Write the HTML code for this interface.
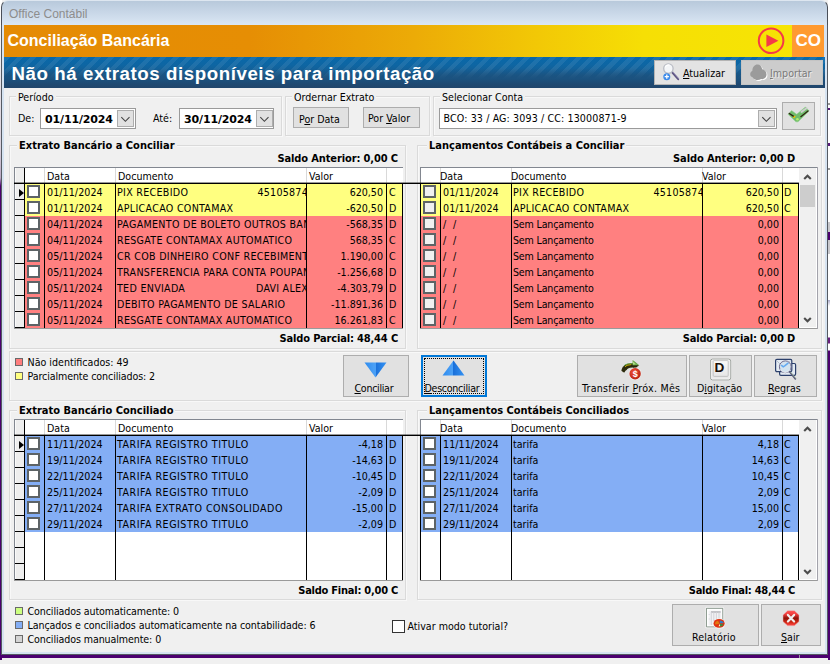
<!DOCTYPE html>
<html lang="pt-BR"><head><meta charset="utf-8"><title>Conciliação Bancária</title>
<style>
*{box-sizing:border-box;margin:0;padding:0}
html,body{width:830px;height:664px;overflow:hidden;background:#f0f0f0}
body{position:relative;font-family:"DejaVu Sans Condensed","DejaVu Sans","Liberation Sans",sans-serif;font-size:10.6px;color:#000;line-height:13px}
.a{position:absolute;white-space:nowrap}
.b{font-weight:bold;font-size:11px}
.gb{position:absolute;border:1px solid #dadada;box-shadow:inset 1px 1px 0 rgba(255,255,255,.55), 1px 1px 0 rgba(255,255,255,.55)}
.gt{position:absolute;background:#f0f0f0;padding:0 2px;white-space:nowrap}
.btn{position:absolute;background:#e1e1e1;border:1px solid #adadad;text-align:center;white-space:nowrap}
.inp{position:absolute;background:#fff;border:1px solid #9a9a9a}
.dd{position:absolute;background:#e1e1e1;border:1px solid #adadad}
.grid{position:absolute;background:#fff;overflow:hidden}
.row{position:absolute;left:0;height:16px}
.c{position:absolute;top:0;height:16px;line-height:16px;white-space:nowrap;overflow:hidden}
.vl{position:absolute;width:1px;background:#000}
.hl{position:absolute;height:1px;background:#000}
.cb{position:absolute;width:13px;height:13px;background:#f0f0f0;border:2px solid #5d6366}
.sw{position:absolute;width:8px;height:8px;border:1px solid #6a6a6a}
u{text-decoration:underline;text-underline-offset:1px}
</style></head>
<body>
<div class="a" style="left:0;top:0;width:830px;height:664px;background:#f0f0f0"></div>
<div class="a" style="left:0;top:0;width:2px;height:664px;background:linear-gradient(#fff 0,#f4f4f6 40px,#e4e0e6 90px,#d8d0dc 150px,#b9a8c4 178px,#4c0070 186px,#4c0070 100%)"></div>
<div class="a" style="left:828px;top:0;width:2px;height:664px;background:linear-gradient(#fff 0,#fff 103px,#999 103px,#999 105px,#fff 105px,#fff 108px,#5a1a7a 108px,#5a1a7a 110px,#fff 110px,#fff 143px,#5a1a7a 143px,#5a1a7a 146px,#fff 146px,#fff 168px,#999 168px,#999 170px,#fff 170px,#fff 222px,#c8c8cc 222px,#c8c8cc 232px,#4c0070 232px,#4c0070 240px,#c8c8cc 240px,#c8c8cc 254px,#fff 254px,#fff 300px,#a9a9c9 300px,#fff 306px,#fff 337px,#6a2080 338px,#6a2080 343px,#fff 344px,#fff 350px,#4c0070 351px,#4c0070 100%)"></div>
<div class="a" style="left:1px;top:0;width:827px;height:26px;background:linear-gradient(#b8c9db,#c6d5e6 40%,#dce8f5);border:1px solid #4a4f58;border-top-color:#dde6f0;border-bottom:0;border-radius:7px 7px 0 0"></div>
<div class="a" style="left:9px;top:7px;font-family:'Liberation Sans',sans-serif;font-size:12px;line-height:15px;color:#8d8d8d">Office Contábil</div>
<div class="a" style="left:1px;top:25px;width:1px;height:630px;background:#555a62"></div>
<div class="a" style="left:2px;top:25px;width:2px;height:629px;background:#d6e3f1"></div>
<div class="a" style="left:827px;top:25px;width:1px;height:630px;background:#555a62"></div>
<div class="a" style="left:824px;top:25px;width:3px;height:32px;background:#d6e3f1"></div>
<div class="a" style="left:825px;top:57px;width:2px;height:597px;background:#d6e3f1"></div>
<div class="a" style="left:2px;top:652px;width:825px;height:2px;background:#d6e3f1"></div>
<div class="a" style="left:1px;top:654px;width:827px;height:1px;background:#555a62"></div>
<div class="a" style="left:0;top:655px;width:830px;height:3px;background:#4c0070"></div>
<div class="a" style="left:799px;top:655px;width:1px;height:3px;background:#9a8fa6"></div>
<div class="a" style="left:0;top:658px;width:830px;height:2px;background:linear-gradient(#e8e8e8 0,#fff 40%%,#fff)"></div>
<div class="a" style="left:0;top:660px;width:830px;height:4px;background:#f0f0f0"></div>
<div class="a" style="left:4px;top:25px;width:820px;height:32px;background:linear-gradient(90deg,#e58b04 0,#e68e04 30%,#ecab07 50%,#f2c806 65%,#f6df05 78%,#f6e604 100%)"></div>
<div class="a b" style="left:7.5px;top:31px;font-family:'Liberation Sans',sans-serif;font-size:16px;line-height:19px;color:#fff">Conciliação Bancária</div>
<svg class="a" style="left:756px;top:26px" width="30" height="30" viewBox="0 0 30 30"><circle cx="15.1" cy="14.7" r="12.3" fill="none" stroke="#f53a48" stroke-width="2"/><path d="M10.4 8.6 L22.4 14.8 L10.4 21 Z" fill="#f53a48"/></svg>
<div class="a" style="left:792px;top:25px;width:32px;height:32px;background:#ff9a30"></div>
<div class="a b" style="left:795.5px;top:31px;font-family:'Liberation Sans',sans-serif;font-size:17px;line-height:20px;color:#fff">CO</div>
<div class="a" style="left:4px;top:57px;width:821px;height:31px;background:linear-gradient(rgba(26,84,132,0) 0,rgba(26,84,132,0) 38%,#1b527f 70%,#1e4a73 85%,#20456b 100%),repeating-linear-gradient(135deg,rgba(255,255,255,.075) 0 4.6px,rgba(255,255,255,0) 4.6px 9.2px),linear-gradient(#0868aa 0,#0e66a3 25%,#155d93 50%,#1b527f 70%,#20456b 100%)"></div>
<div class="a b" style="left:11.5px;top:63px;font-family:'Liberation Sans',sans-serif;font-size:18.7px;letter-spacing:.57px;line-height:22px;color:#fff">Não há extratos disponíveis para importação</div>
<div class="btn" style="left:654px;top:60px;width:82px;height:25px;background:#e3e3e3;border-color:#b4b4b4"></div>
<svg class="a" style="left:660px;top:62px" width="22" height="21" viewBox="0 0 22 21"><path d="M11.5 9.5 L18.2 17.2" stroke="#5b5280" stroke-width="2" stroke-linecap="round"/><path d="M11.5 9.5 L18.2 17.2" stroke="#a9a3c4" stroke-width=".7" stroke-linecap="round" transform="translate(.6,-.6)"/><circle cx="8.4" cy="6.6" r="4.7" fill="#f4f6f8" stroke="#b9bcc4" stroke-width="1.3"/><path d="M5.2 5.4 A3.6 3.6 0 0 1 9.6 3.2" fill="none" stroke="#fff" stroke-width="1.2"/><circle cx="6.8" cy="14.7" r="3.5" fill="#3d8bea"/><path d="M6.8 12.6 V16.8 M4.7 14.7 H8.9" stroke="#fff" stroke-width="1.3"/></svg>
<div class="a" style="left:683px;top:67px"><u>A</u>tualizar</div>
<div class="btn" style="left:741px;top:60px;width:82px;height:25px;background:#cccccc;border-color:#c4c4c4"></div>
<svg class="a" style="left:749px;top:63px" width="20" height="19" viewBox="0 0 20 19"><path d="M3.2 14.2 C0.6 13.2 0.4 9.2 3.4 7.8 C3.2 3.8 6 1.2 8.6 1.4 C11 1.4 12.6 3.4 13.2 6.2 C16.2 6.8 18 9.4 17.4 12.6 C17 15.2 14.6 16.6 12 16 C9.6 17.8 5.4 17.2 3.2 14.2 Z" fill="#fff" transform="translate(.9,.9)"/><path d="M3.2 14.2 C0.6 13.2 0.4 9.2 3.4 7.8 C3.2 3.8 6 1.2 8.6 1.4 C11 1.4 12.6 3.4 13.2 6.2 C16.2 6.8 18 9.4 17.4 12.6 C17 15.2 14.6 16.6 12 16 C9.6 17.8 5.4 17.2 3.2 14.2 Z" fill="#9b9b9b"/></svg>
<div class="a" style="left:770px;top:67px;color:#7a7a7a;text-shadow:1px 1px 0 #e9e9e9"><u>I</u>mportar</div>
<div class="gb" style="left:9px;top:96px;width:273px;height:40px"></div>
<div class="gt" style="left:16px;top:91px">Período</div>
<div class="gb" style="left:285px;top:96px;width:145px;height:40px"></div>
<div class="gt" style="left:292px;top:91px">Ordernar Extrato</div>
<div class="gb" style="left:433px;top:96px;width:388px;height:40px"></div>
<div class="gt" style="left:440px;top:91px">Selecionar Conta</div>
<div class="a" style="left:18px;top:112px">De:</div>
<div class="inp" style="left:40px;top:108px;width:96px;height:21px"></div>
<div class="a b" style="left:45px;top:113px;letter-spacing:-.14px;font-size:11px;font-family:'DejaVu Sans',sans-serif">01/11/2024</div>
<div class="dd" style="left:117px;top:110px;width:17px;height:17px"></div>
<div class="a" style="left:153px;top:112px">Até:</div>
<div class="inp" style="left:179px;top:108px;width:95px;height:21px"></div>
<div class="a b" style="left:184px;top:113px;letter-spacing:-.14px;font-size:11px;font-family:'DejaVu Sans',sans-serif">30/11/2024</div>
<div class="dd" style="left:256px;top:110px;width:17px;height:17px"></div>
<svg class="a" style="left:120px;top:116px" width="11" height="7" viewBox="0 0 11 7"><path d="M1.3 1.2 L5.4 5.3 L9.5 1.2" fill="none" stroke="#444" stroke-width="1.1"/></svg>
<svg class="a" style="left:259px;top:116px" width="11" height="7" viewBox="0 0 11 7"><path d="M1.3 1.2 L5.4 5.3 L9.5 1.2" fill="none" stroke="#444" stroke-width="1.1"/></svg>
<div class="btn" style="left:293px;top:107px;width:56px;height:21px"></div>
<div class="a" style="left:299px;top:113px">P<u>o</u>r Data</div>
<div class="btn" style="left:363px;top:107px;width:57px;height:21px"></div>
<div class="a" style="left:368px;top:112px">Por <u>V</u>alor</div>
<div class="inp" style="left:439px;top:108px;width:338px;height:21px"></div>
<div class="a" style="left:443.5px;top:112px;letter-spacing:.12px">BCO: 33 / AG: 3093 / CC: 13000871-9</div>
<div class="dd" style="left:758px;top:110px;width:17px;height:17px"></div>
<svg class="a" style="left:761px;top:116px" width="11" height="7" viewBox="0 0 11 7"><path d="M1.3 1.2 L5.4 5.3 L9.5 1.2" fill="none" stroke="#444" stroke-width="1.1"/></svg>
<div class="btn" style="left:782px;top:102px;width:33px;height:28px"></div>
<svg class="a" style="left:787px;top:105px" width="24" height="20" viewBox="0 0 24 20"><path d="M4.55 5.57 L9.7 9.26 L18.37 1.94 L22.17 6 L11.05 16.85 L8.89 16.85 L1.03 9.26 Z" fill="#70bc6c" stroke="#8fd08a" stroke-width=".5"/><path d="M14.58 6.82 L19.46 3.3" stroke="#cbcdcb" stroke-width="2" stroke-linecap="round"/><path d="M2.3 8.5 L6.7 11.4" stroke="#2e2410" stroke-width="1.4" stroke-linecap="round"/><path d="M13.8 11.7 L21 5.95" stroke="#2e2410" stroke-width="1.2" stroke-linecap="round"/><ellipse cx="7.3" cy="11.9" rx="1.4" ry=".8" fill="#f2c200" transform="rotate(-35 7.3 11.9)"/><circle cx="10.4" cy="14.3" r="1.3" fill="#b4f06a"/></svg>
<div class="gb" style="left:9px;top:145px;width:397px;height:204px"></div>
<div class="gt b" style="left:17px;top:139px">Extrato Bancário a Conciliar</div>
<div class="gb" style="left:417px;top:145px;width:405px;height:204px"></div>
<div class="gt b" style="left:427px;top:139px">Lançamentos Contábeis a Conciliar</div>
<div class="a" style="left:14px;top:167px;width:389px;height:161px;background:#fff;border-top:1px solid #828790;border-left:1px solid #828790"></div>
<div class="a" style="left:25px;top:184px;width:377px;height:16px;background:#ffff80">
<div class="cb" style="left:2px;top:1px;background:#fff"></div>
<div class="c" style="left:20px;width:70px;letter-spacing:.08px;padding-left:2px;">01/11/2024</div>
<div class="c" style="left:91px;width:190px;letter-spacing:.3px;padding-left:1px;">PIX RECEBIDO</div>
<div class="c" style="left:91px;width:190px"><div style="position:absolute;right:-2px;top:0;letter-spacing:.25px">45105874</div></div>
<div class="c" style="left:282px;width:79px;text-align:right;padding-right:3px;">620,50</div>
<div class="c" style="left:362px;width:15px;padding-left:2px;">C</div>
</div>
<div class="a" style="left:25px;top:200px;width:377px;height:16px;background:#ffff80">
<div class="cb" style="left:2px;top:1px;background:#fff"></div>
<div class="c" style="left:20px;width:70px;letter-spacing:.08px;padding-left:2px;">01/11/2024</div>
<div class="c" style="left:91px;width:190px;letter-spacing:.3px;padding-left:1px;">APLICACAO CONTAMAX</div>
<div class="c" style="left:282px;width:79px;text-align:right;padding-right:3px;">-620,50</div>
<div class="c" style="left:362px;width:15px;padding-left:2px;">D</div>
</div>
<div class="a" style="left:25px;top:216px;width:377px;height:16px;background:#ff8080">
<div class="cb" style="left:2px;top:1px;background:#fff"></div>
<div class="c" style="left:20px;width:70px;letter-spacing:.08px;padding-left:2px;">04/11/2024</div>
<div class="c" style="left:91px;width:190px;letter-spacing:.3px;padding-left:1px;">PAGAMENTO DE BOLETO OUTROS BANCOS</div>
<div class="c" style="left:282px;width:79px;text-align:right;padding-right:3px;">-568,35</div>
<div class="c" style="left:362px;width:15px;padding-left:2px;">D</div>
</div>
<div class="a" style="left:25px;top:232px;width:377px;height:16px;background:#ff8080">
<div class="cb" style="left:2px;top:1px;background:#fff"></div>
<div class="c" style="left:20px;width:70px;letter-spacing:.08px;padding-left:2px;">04/11/2024</div>
<div class="c" style="left:91px;width:190px;letter-spacing:.3px;padding-left:1px;">RESGATE CONTAMAX AUTOMATICO</div>
<div class="c" style="left:282px;width:79px;text-align:right;padding-right:3px;">568,35</div>
<div class="c" style="left:362px;width:15px;padding-left:2px;">C</div>
</div>
<div class="a" style="left:25px;top:248px;width:377px;height:16px;background:#ff8080">
<div class="cb" style="left:2px;top:1px;background:#fff"></div>
<div class="c" style="left:20px;width:70px;letter-spacing:.08px;padding-left:2px;">05/11/2024</div>
<div class="c" style="left:91px;width:190px;letter-spacing:.3px;padding-left:1px;">CR COB DINHEIRO CONF RECEBIMENTO</div>
<div class="c" style="left:282px;width:79px;text-align:right;padding-right:3px;">1.190,00</div>
<div class="c" style="left:362px;width:15px;padding-left:2px;">C</div>
</div>
<div class="a" style="left:25px;top:264px;width:377px;height:16px;background:#ff8080">
<div class="cb" style="left:2px;top:1px;background:#fff"></div>
<div class="c" style="left:20px;width:70px;letter-spacing:.08px;padding-left:2px;">05/11/2024</div>
<div class="c" style="left:91px;width:190px;letter-spacing:.3px;padding-left:1px;">TRANSFERENCIA PARA CONTA POUPANCA</div>
<div class="c" style="left:282px;width:79px;text-align:right;padding-right:3px;">-1.256,68</div>
<div class="c" style="left:362px;width:15px;padding-left:2px;">D</div>
</div>
<div class="a" style="left:25px;top:280px;width:377px;height:16px;background:#ff8080">
<div class="cb" style="left:2px;top:1px;background:#fff"></div>
<div class="c" style="left:20px;width:70px;letter-spacing:.08px;padding-left:2px;">05/11/2024</div>
<div class="c" style="left:91px;width:190px;letter-spacing:.3px;padding-left:1px;">TED ENVIADA</div>
<div class="c" style="left:91px;width:190px"><div style="position:absolute;right:-2px;top:0;letter-spacing:.25px">DAVI ALEX</div></div>
<div class="c" style="left:282px;width:79px;text-align:right;padding-right:3px;">-4.303,79</div>
<div class="c" style="left:362px;width:15px;padding-left:2px;">D</div>
</div>
<div class="a" style="left:25px;top:296px;width:377px;height:16px;background:#ff8080">
<div class="cb" style="left:2px;top:1px;background:#fff"></div>
<div class="c" style="left:20px;width:70px;letter-spacing:.08px;padding-left:2px;">05/11/2024</div>
<div class="c" style="left:91px;width:190px;letter-spacing:.3px;padding-left:1px;">DEBITO PAGAMENTO DE SALARIO</div>
<div class="c" style="left:282px;width:79px;text-align:right;padding-right:3px;">-11.891,36</div>
<div class="c" style="left:362px;width:15px;padding-left:2px;">D</div>
</div>
<div class="a" style="left:25px;top:312px;width:377px;height:16px;background:#ff8080">
<div class="cb" style="left:2px;top:1px;background:#fff"></div>
<div class="c" style="left:20px;width:70px;letter-spacing:.08px;padding-left:2px;">05/11/2024</div>
<div class="c" style="left:91px;width:190px;letter-spacing:.3px;padding-left:1px;">RESGATE CONTAMAX AUTOMATICO</div>
<div class="c" style="left:282px;width:79px;text-align:right;padding-right:3px;">16.261,83</div>
<div class="c" style="left:362px;width:15px;padding-left:2px;">C</div>
</div>
<div class="a" style="left:15px;top:168px;width:9px;height:160px;background:#eeeeee;box-shadow:inset 1px 0 0 #fafafa"></div>
<div class="hl" style="left:15px;top:199px;width:10px"></div>
<div class="hl" style="left:15px;top:215px;width:10px"></div>
<div class="hl" style="left:15px;top:231px;width:10px"></div>
<div class="hl" style="left:15px;top:247px;width:10px"></div>
<div class="hl" style="left:15px;top:263px;width:10px"></div>
<div class="hl" style="left:15px;top:279px;width:10px"></div>
<div class="hl" style="left:15px;top:295px;width:10px"></div>
<div class="hl" style="left:15px;top:311px;width:10px"></div>
<div class="hl" style="left:15px;top:327px;width:10px"></div>
<div class="vl" style="left:24px;top:168px;height:160px"></div>
<svg class="a" style="left:19px;top:189px" width="5" height="8" viewBox="0 0 5 8"><path d="M0 0 L5 4 L0 8 Z" fill="#000"/></svg>
<div class="vl" style="left:44px;top:184px;height:144px"></div>
<div class="vl" style="left:115px;top:184px;height:144px"></div>
<div class="vl" style="left:306px;top:184px;height:144px"></div>
<div class="vl" style="left:386px;top:184px;height:144px"></div>
<div class="vl" style="left:402px;top:184px;height:144px"></div>
<div class="vl" style="left:44px;top:168px;height:15px;background:#d9d9d9"></div>
<div class="vl" style="left:115px;top:168px;height:15px;background:#d9d9d9"></div>
<div class="vl" style="left:306px;top:168px;height:15px;background:#d9d9d9"></div>
<div class="vl" style="left:386px;top:168px;height:15px;background:#d9d9d9"></div>
<div class="a" style="left:47px;top:169px;line-height:15px">Data</div>
<div class="a" style="left:118px;top:169px;line-height:15px">Documento</div>
<div class="a" style="left:309px;top:169px;line-height:15px">Valor</div>
<div class="a" style="left:14px;top:182px;width:426px;height:2px;background:linear-gradient(rgba(0,0,0,.4) 0,rgba(0,0,0,.4) 50%,#000 50%)"></div>
<div class="a" style="left:14px;top:328px;width:389px;height:1px;background:#9a9a9a"></div>
<div class="a" style="left:420px;top:167px;width:398px;height:161px;background:#fff;border-top:1px solid #828790;border-left:1px solid #828790"></div>
<div class="a" style="left:421px;top:184px;width:377px;height:16px;background:#ffff80">
<div class="cb" style="left:2px;top:1px"></div>
<div class="c" style="left:20px;width:70px;letter-spacing:.08px;padding-left:2px;">01/11/2024</div>
<div class="c" style="left:91px;width:190px;letter-spacing:.3px;padding-left:1px;">PIX RECEBIDO</div>
<div class="c" style="left:91px;width:190px"><div style="position:absolute;right:-2px;top:0;letter-spacing:.25px">45105874</div></div>
<div class="c" style="left:282px;width:79px;text-align:right;padding-right:3px;">620,50</div>
<div class="c" style="left:362px;width:15px;padding-left:1px;">D</div>
</div>
<div class="a" style="left:421px;top:200px;width:377px;height:16px;background:#ffff80">
<div class="cb" style="left:2px;top:1px"></div>
<div class="c" style="left:20px;width:70px;letter-spacing:.08px;padding-left:2px;">01/11/2024</div>
<div class="c" style="left:91px;width:190px;letter-spacing:.3px;padding-left:1px;">APLICACAO CONTAMAX</div>
<div class="c" style="left:282px;width:79px;text-align:right;padding-right:3px;">620,50</div>
<div class="c" style="left:362px;width:15px;padding-left:1px;">C</div>
</div>
<div class="a" style="left:421px;top:216px;width:377px;height:16px;background:#ff8080">
<div class="cb" style="left:2px;top:1px"></div>
<div class="c" style="left:20px;width:70px;word-spacing:3.8px;padding-left:2px;">/ /</div>
<div class="c" style="left:91px;width:190px;letter-spacing:-.18px;padding-left:1px;">Sem Lançamento</div>
<div class="c" style="left:282px;width:79px;text-align:right;padding-right:3px;">0,00</div>
<div class="c" style="left:362px;width:15px;padding-left:1px;"></div>
</div>
<div class="a" style="left:421px;top:232px;width:377px;height:16px;background:#ff8080">
<div class="cb" style="left:2px;top:1px"></div>
<div class="c" style="left:20px;width:70px;word-spacing:3.8px;padding-left:2px;">/ /</div>
<div class="c" style="left:91px;width:190px;letter-spacing:-.18px;padding-left:1px;">Sem Lançamento</div>
<div class="c" style="left:282px;width:79px;text-align:right;padding-right:3px;">0,00</div>
<div class="c" style="left:362px;width:15px;padding-left:1px;"></div>
</div>
<div class="a" style="left:421px;top:248px;width:377px;height:16px;background:#ff8080">
<div class="cb" style="left:2px;top:1px"></div>
<div class="c" style="left:20px;width:70px;word-spacing:3.8px;padding-left:2px;">/ /</div>
<div class="c" style="left:91px;width:190px;letter-spacing:-.18px;padding-left:1px;">Sem Lançamento</div>
<div class="c" style="left:282px;width:79px;text-align:right;padding-right:3px;">0,00</div>
<div class="c" style="left:362px;width:15px;padding-left:1px;"></div>
</div>
<div class="a" style="left:421px;top:264px;width:377px;height:16px;background:#ff8080">
<div class="cb" style="left:2px;top:1px"></div>
<div class="c" style="left:20px;width:70px;word-spacing:3.8px;padding-left:2px;">/ /</div>
<div class="c" style="left:91px;width:190px;letter-spacing:-.18px;padding-left:1px;">Sem Lançamento</div>
<div class="c" style="left:282px;width:79px;text-align:right;padding-right:3px;">0,00</div>
<div class="c" style="left:362px;width:15px;padding-left:1px;"></div>
</div>
<div class="a" style="left:421px;top:280px;width:377px;height:16px;background:#ff8080">
<div class="cb" style="left:2px;top:1px"></div>
<div class="c" style="left:20px;width:70px;word-spacing:3.8px;padding-left:2px;">/ /</div>
<div class="c" style="left:91px;width:190px;letter-spacing:-.18px;padding-left:1px;">Sem Lançamento</div>
<div class="c" style="left:282px;width:79px;text-align:right;padding-right:3px;">0,00</div>
<div class="c" style="left:362px;width:15px;padding-left:1px;"></div>
</div>
<div class="a" style="left:421px;top:296px;width:377px;height:16px;background:#ff8080">
<div class="cb" style="left:2px;top:1px"></div>
<div class="c" style="left:20px;width:70px;word-spacing:3.8px;padding-left:2px;">/ /</div>
<div class="c" style="left:91px;width:190px;letter-spacing:-.18px;padding-left:1px;">Sem Lançamento</div>
<div class="c" style="left:282px;width:79px;text-align:right;padding-right:3px;">0,00</div>
<div class="c" style="left:362px;width:15px;padding-left:1px;"></div>
</div>
<div class="a" style="left:421px;top:312px;width:377px;height:16px;background:#ff8080">
<div class="cb" style="left:2px;top:1px"></div>
<div class="c" style="left:20px;width:70px;word-spacing:3.8px;padding-left:2px;">/ /</div>
<div class="c" style="left:91px;width:190px;letter-spacing:-.18px;padding-left:1px;">Sem Lançamento</div>
<div class="c" style="left:282px;width:79px;text-align:right;padding-right:3px;">0,00</div>
<div class="c" style="left:362px;width:15px;padding-left:1px;"></div>
</div>
<div class="vl" style="left:440px;top:184px;height:144px"></div>
<div class="vl" style="left:511px;top:184px;height:144px"></div>
<div class="vl" style="left:702px;top:184px;height:144px"></div>
<div class="vl" style="left:782px;top:184px;height:144px"></div>
<div class="vl" style="left:798px;top:184px;height:144px"></div>
<div class="vl" style="left:420px;top:184px;height:144px"></div>
<div class="vl" style="left:440px;top:168px;height:15px;background:#d9d9d9"></div>
<div class="vl" style="left:511px;top:168px;height:15px;background:#d9d9d9"></div>
<div class="vl" style="left:702px;top:168px;height:15px;background:#d9d9d9"></div>
<div class="vl" style="left:782px;top:168px;height:15px;background:#d9d9d9"></div>
<div class="a" style="left:440px;top:169px;line-height:15px">Data</div>
<div class="a" style="left:511px;top:169px;line-height:15px">Documento</div>
<div class="a" style="left:702px;top:169px;line-height:15px">Valor</div>
<div class="a" style="left:420px;top:182px;width:380px;height:2px;background:linear-gradient(rgba(0,0,0,.4) 0,rgba(0,0,0,.4) 50%,#000 50%)"></div>
<div class="a" style="left:420px;top:328px;width:398px;height:1px;background:#9a9a9a"></div>
<div class="a" style="left:799px;top:168px;width:18px;height:160px;background:#f0f0f0"></div>
<svg class="a" style="left:803px;top:174px" width="9" height="6" viewBox="0 0 9 6"><path d="M1.2 5 L4.5 1.7 L7.8 5" fill="none" stroke="#4c4c4c" stroke-width="2.1"/></svg>
<svg class="a" style="left:803px;top:317px" width="9" height="6" viewBox="0 0 9 6"><path d="M1.2 1 L4.5 4.3 L7.8 1" fill="none" stroke="#4c4c4c" stroke-width="2.1"/></svg>
<div class="a" style="left:800px;top:185px;width:15px;height:22px;background:#cdcdcd"></div>
<div class="a" style="left:817px;top:167px;width:1px;height:162px;background:#a3a3ab"></div>
<div class="a" style="left:816px;top:168px;width:1px;height:160px;background:#fff"></div>
<div class="a" style="left:799px;top:184px;width:1px;height:144px;background:#fff"></div>
<div class="a" style="left:799px;top:327px;width:18px;height:1px;background:#fff"></div>
<div class="a b" style="right:432px;top:152px;letter-spacing:-.12px">Saldo Anterior: 0,00 C</div>
<div class="a b" style="right:35px;top:152px;letter-spacing:-.1px">Saldo Anterior: 0,00 D</div>
<div class="a b" style="right:432px;top:332px;letter-spacing:-.15px">Saldo Parcial: 48,44 C</div>
<div class="a b" style="right:35px;top:332px;letter-spacing:-.17px">Saldo Parcial: 0,00 D</div>
<div class="gb" style="left:9px;top:351px;width:813px;height:50px"></div>
<div class="sw" style="left:15px;top:358px;background:#ff7d7d"></div>
<div class="a" style="left:27.5px;top:356px">Não identificados: 49</div>
<div class="sw" style="left:15px;top:372px;background:#ffff80"></div>
<div class="a" style="left:27.5px;top:370px;letter-spacing:-.1px">Parcialmente conciliados: 2</div>
<div class="btn" style="left:343px;top:355px;width:66px;height:42px"></div>
<svg class="a" style="left:364px;top:362px" width="23" height="16" viewBox="0 0 23 16"><defs><linearGradient id="g1" x1="0" x2="1"><stop offset="0" stop-color="#2c8bef"/><stop offset=".42" stop-color="#4a9ff5"/><stop offset=".5" stop-color="#4a9ff5"/><stop offset=".5" stop-color="#1a70da"/><stop offset="1" stop-color="#3593f3"/></linearGradient></defs><path d="M0.5 0.5 L22.5 0.5 L11.5 15.5 Z" fill="url(#g1)"/></svg>
<div class="a" style="left:354.5px;top:382px;letter-spacing:-.3px"><u>C</u>onciliar</div>
<div class="btn" style="left:421px;top:355px;width:66px;height:42px;border:2px solid #0078d7"></div>
<div class="a" style="left:424px;top:358px;width:60px;height:36px;border:1px dotted #000"></div>
<svg class="a" style="left:442px;top:360px" width="23" height="16" viewBox="0 0 23 16"><path d="M0.5 15.5 L22.5 15.5 L11.5 0.5 Z" fill="url(#g1)"/></svg>
<div class="a" style="left:424.5px;top:382px;letter-spacing:-.28px"><u>D</u>esconciliar</div>
<div class="btn" style="left:577px;top:355px;width:110px;height:42px"></div>
<svg class="a" style="left:620px;top:358px" width="24" height="24" viewBox="0 0 24 24"><defs><radialGradient id="gc" cx=".4" cy=".35" r=".7"><stop offset="0" stop-color="#f0503a"/><stop offset="1" stop-color="#b7200f"/></radialGradient></defs><path d="M0.9 13 C1.6 7.8 5.4 4.9 12.6 4.9 L12.6 1.7 L19.4 7.3 L13.2 12.9 L13.2 10 C8.8 9.8 6.4 11.4 4.3 15.3 Z" fill="#2b2a0c" stroke="#f4f4f4" stroke-width=".8"/><path d="M12.6 1.9 L19.2 7.2 L12.6 7.2 Z" fill="#6fb052"/><path d="M12.9 3.6 L15.6 6.3 L12.9 6.6 Z" fill="#b9e08a"/><path d="M4.2 7.6 C6.3 5.9 9 5.5 12.7 5.6" fill="none" stroke="#5d9a40" stroke-width="1"/><path d="M5 8.8 L7 7.3 L11.3 6.6" fill="none" stroke="#f2d400" stroke-width=".8"/><circle cx="15.1" cy="15.8" r="6.3" fill="#f4f4f4"/><circle cx="15.1" cy="15.8" r="5.7" fill="url(#gc)"/><text x="15.2" y="19" font-family="Liberation Sans,sans-serif" font-size="9" font-weight="bold" fill="#fff" text-anchor="middle">$</text></svg>
<div class="a" style="left:582px;top:382px;letter-spacing:.25px">Transferir <u>P</u>róx. Mês</div>
<div class="btn" style="left:689px;top:355px;width:63px;height:42px"></div>
<svg class="a" style="left:708px;top:357px" width="26" height="26" viewBox="0 0 26 26"><defs><linearGradient id="gk" x1="0" y1="0" x2="0" y2="1"><stop offset="0" stop-color="#fafafa"/><stop offset="1" stop-color="#e6e6e6"/></linearGradient></defs><rect x="2.6" y="2.2" width="20" height="20.6" rx="1.8" fill="#e9e9e9" stroke="#8f948f" stroke-width="1"/><rect x="3.2" y="2.8" width="18.8" height="19.4" rx="1.4" fill="none" stroke="#fff" stroke-width=".6"/><rect x="5.2" y="3.6" width="15" height="15.8" rx="1" fill="url(#gk)" stroke="#b5b5b5" stroke-width=".7"/><text x="6.6" y="15.1" font-family="Liberation Sans,sans-serif" font-size="13.6" font-weight="bold" fill="#1a0f08">D</text></svg>
<div class="a" style="left:697px;top:382px">D<u>i</u>gitação</div>
<div class="btn" style="left:754px;top:355px;width:63px;height:42px"></div>
<svg class="a" style="left:773px;top:357px" width="26" height="26" viewBox="0 0 26 26"><rect x="6.6" y="6.5" width="16" height="11.8" rx="1.3" fill="#e4ebf3" stroke="#2b3f6b" stroke-width="1.2"/><rect x="2.6" y="2.4" width="16.2" height="12.2" rx="1.3" fill="#e4ebf3" stroke="#2b3f6b" stroke-width="1.2"/><path d="M3.6 3.6 L7 7 M17.6 3.6 L15 6.2" stroke="#9aa6b8" stroke-width=".6"/><path d="M16.8 15 L22.4 22" stroke="#5b5b7a" stroke-width="1.6" stroke-linecap="round"/><path d="M17.6 15 L22.8 21.4" stroke="#9fc29a" stroke-width=".6" stroke-linecap="round"/><circle cx="12.3" cy="9.8" r="5.9" fill="#d3e3ef" stroke="#6f6a8c" stroke-width="1"/><path d="M8.2 8.2 L10.2 9.8 L12 8.6 L15.4 5.8" fill="none" stroke="#62a9f0" stroke-width="1.5"/><path d="M7.4 12.4 A5.4 5.4 0 0 0 17 12.6" fill="none" stroke="#eef3f7" stroke-width="1"/></svg>
<div class="a" style="left:768px;top:382px"><u>R</u>egras</div>
<div class="gb" style="left:9px;top:410px;width:397px;height:190px"></div>
<div class="gt b" style="left:17px;top:404px">Extrato Bancário Conciliado</div>
<div class="gb" style="left:417px;top:410px;width:405px;height:190px"></div>
<div class="gt b" style="left:427px;top:404px">Lançamentos Contábeis Conciliados</div>
<div class="a" style="left:14px;top:419px;width:389px;height:161px;background:#fff;border-top:1px solid #828790;border-left:1px solid #828790"></div>
<div class="a" style="left:25px;top:436px;width:377px;height:16px;background:#84aef5">
<div class="cb" style="left:2px;top:1px;background:#fff"></div>
<div class="c" style="left:20px;width:70px;letter-spacing:.08px;padding-left:2px;">11/11/2024</div>
<div class="c" style="left:91px;width:190px;letter-spacing:.5px;padding-left:1px;">TARIFA REGISTRO TITULO</div>
<div class="c" style="left:282px;width:79px;text-align:right;padding-right:3px;">-4,18</div>
<div class="c" style="left:362px;width:15px;padding-left:2px;">D</div>
</div>
<div class="a" style="left:25px;top:452px;width:377px;height:16px;background:#84aef5">
<div class="cb" style="left:2px;top:1px;background:#fff"></div>
<div class="c" style="left:20px;width:70px;letter-spacing:.08px;padding-left:2px;">19/11/2024</div>
<div class="c" style="left:91px;width:190px;letter-spacing:.5px;padding-left:1px;">TARIFA REGISTRO TITULO</div>
<div class="c" style="left:282px;width:79px;text-align:right;padding-right:3px;">-14,63</div>
<div class="c" style="left:362px;width:15px;padding-left:2px;">D</div>
</div>
<div class="a" style="left:25px;top:468px;width:377px;height:16px;background:#84aef5">
<div class="cb" style="left:2px;top:1px;background:#fff"></div>
<div class="c" style="left:20px;width:70px;letter-spacing:.08px;padding-left:2px;">22/11/2024</div>
<div class="c" style="left:91px;width:190px;letter-spacing:.5px;padding-left:1px;">TARIFA REGISTRO TITULO</div>
<div class="c" style="left:282px;width:79px;text-align:right;padding-right:3px;">-10,45</div>
<div class="c" style="left:362px;width:15px;padding-left:2px;">D</div>
</div>
<div class="a" style="left:25px;top:484px;width:377px;height:16px;background:#84aef5">
<div class="cb" style="left:2px;top:1px;background:#fff"></div>
<div class="c" style="left:20px;width:70px;letter-spacing:.08px;padding-left:2px;">25/11/2024</div>
<div class="c" style="left:91px;width:190px;letter-spacing:.5px;padding-left:1px;">TARIFA REGISTRO TITULO</div>
<div class="c" style="left:282px;width:79px;text-align:right;padding-right:3px;">-2,09</div>
<div class="c" style="left:362px;width:15px;padding-left:2px;">D</div>
</div>
<div class="a" style="left:25px;top:500px;width:377px;height:16px;background:#84aef5">
<div class="cb" style="left:2px;top:1px;background:#fff"></div>
<div class="c" style="left:20px;width:70px;letter-spacing:.08px;padding-left:2px;">27/11/2024</div>
<div class="c" style="left:91px;width:190px;letter-spacing:.5px;padding-left:1px;">TARIFA EXTRATO CONSOLIDADO</div>
<div class="c" style="left:282px;width:79px;text-align:right;padding-right:3px;">-15,00</div>
<div class="c" style="left:362px;width:15px;padding-left:2px;">D</div>
</div>
<div class="a" style="left:25px;top:516px;width:377px;height:16px;background:#84aef5">
<div class="cb" style="left:2px;top:1px;background:#fff"></div>
<div class="c" style="left:20px;width:70px;letter-spacing:.08px;padding-left:2px;">29/11/2024</div>
<div class="c" style="left:91px;width:190px;letter-spacing:.5px;padding-left:1px;">TARIFA REGISTRO TITULO</div>
<div class="c" style="left:282px;width:79px;text-align:right;padding-right:3px;">-2,09</div>
<div class="c" style="left:362px;width:15px;padding-left:2px;">D</div>
</div>
<div class="a" style="left:15px;top:420px;width:9px;height:160px;background:#eeeeee;box-shadow:inset 1px 0 0 #fafafa"></div>
<div class="hl" style="left:15px;top:451px;width:10px"></div>
<div class="hl" style="left:15px;top:467px;width:10px"></div>
<div class="hl" style="left:15px;top:483px;width:10px"></div>
<div class="hl" style="left:15px;top:499px;width:10px"></div>
<div class="hl" style="left:15px;top:515px;width:10px"></div>
<div class="hl" style="left:15px;top:531px;width:10px"></div>
<div class="hl" style="left:15px;top:547px;width:10px"></div>
<div class="hl" style="left:15px;top:563px;width:10px"></div>
<div class="hl" style="left:15px;top:579px;width:10px"></div>
<div class="vl" style="left:24px;top:420px;height:160px"></div>
<svg class="a" style="left:19px;top:441px" width="5" height="8" viewBox="0 0 5 8"><path d="M0 0 L5 4 L0 8 Z" fill="#000"/></svg>
<div class="vl" style="left:44px;top:436px;height:144px"></div>
<div class="vl" style="left:115px;top:436px;height:144px"></div>
<div class="vl" style="left:306px;top:436px;height:144px"></div>
<div class="vl" style="left:386px;top:436px;height:144px"></div>
<div class="vl" style="left:402px;top:436px;height:144px"></div>
<div class="vl" style="left:44px;top:420px;height:15px;background:#d9d9d9"></div>
<div class="vl" style="left:115px;top:420px;height:15px;background:#d9d9d9"></div>
<div class="vl" style="left:306px;top:420px;height:15px;background:#d9d9d9"></div>
<div class="vl" style="left:386px;top:420px;height:15px;background:#d9d9d9"></div>
<div class="a" style="left:47px;top:421px;line-height:15px">Data</div>
<div class="a" style="left:118px;top:421px;line-height:15px">Documento</div>
<div class="a" style="left:309px;top:421px;line-height:15px">Valor</div>
<div class="a" style="left:14px;top:434px;width:426px;height:2px;background:linear-gradient(rgba(0,0,0,.4) 0,rgba(0,0,0,.4) 50%,#000 50%)"></div>
<div class="a" style="left:14px;top:580px;width:389px;height:1px;background:#9a9a9a"></div>
<div class="a" style="left:420px;top:419px;width:398px;height:161px;background:#fff;border-top:1px solid #828790;border-left:1px solid #828790"></div>
<div class="a" style="left:421px;top:436px;width:377px;height:16px;background:#84aef5">
<div class="cb" style="left:2px;top:1px;background:#fff"></div>
<div class="c" style="left:20px;width:70px;letter-spacing:.08px;padding-left:2px;">11/11/2024</div>
<div class="c" style="left:91px;width:190px;padding-left:1px;">tarifa</div>
<div class="c" style="left:282px;width:79px;text-align:right;padding-right:3px;">4,18</div>
<div class="c" style="left:362px;width:15px;padding-left:1px;">C</div>
</div>
<div class="a" style="left:421px;top:452px;width:377px;height:16px;background:#84aef5">
<div class="cb" style="left:2px;top:1px;background:#fff"></div>
<div class="c" style="left:20px;width:70px;letter-spacing:.08px;padding-left:2px;">19/11/2024</div>
<div class="c" style="left:91px;width:190px;padding-left:1px;">tarifa</div>
<div class="c" style="left:282px;width:79px;text-align:right;padding-right:3px;">14,63</div>
<div class="c" style="left:362px;width:15px;padding-left:1px;">C</div>
</div>
<div class="a" style="left:421px;top:468px;width:377px;height:16px;background:#84aef5">
<div class="cb" style="left:2px;top:1px;background:#fff"></div>
<div class="c" style="left:20px;width:70px;letter-spacing:.08px;padding-left:2px;">22/11/2024</div>
<div class="c" style="left:91px;width:190px;padding-left:1px;">tarifa</div>
<div class="c" style="left:282px;width:79px;text-align:right;padding-right:3px;">10,45</div>
<div class="c" style="left:362px;width:15px;padding-left:1px;">C</div>
</div>
<div class="a" style="left:421px;top:484px;width:377px;height:16px;background:#84aef5">
<div class="cb" style="left:2px;top:1px;background:#fff"></div>
<div class="c" style="left:20px;width:70px;letter-spacing:.08px;padding-left:2px;">25/11/2024</div>
<div class="c" style="left:91px;width:190px;padding-left:1px;">tarifa</div>
<div class="c" style="left:282px;width:79px;text-align:right;padding-right:3px;">2,09</div>
<div class="c" style="left:362px;width:15px;padding-left:1px;">C</div>
</div>
<div class="a" style="left:421px;top:500px;width:377px;height:16px;background:#84aef5">
<div class="cb" style="left:2px;top:1px;background:#fff"></div>
<div class="c" style="left:20px;width:70px;letter-spacing:.08px;padding-left:2px;">27/11/2024</div>
<div class="c" style="left:91px;width:190px;padding-left:1px;">tarifa</div>
<div class="c" style="left:282px;width:79px;text-align:right;padding-right:3px;">15,00</div>
<div class="c" style="left:362px;width:15px;padding-left:1px;">C</div>
</div>
<div class="a" style="left:421px;top:516px;width:377px;height:16px;background:#84aef5">
<div class="cb" style="left:2px;top:1px;background:#fff"></div>
<div class="c" style="left:20px;width:70px;letter-spacing:.08px;padding-left:2px;">29/11/2024</div>
<div class="c" style="left:91px;width:190px;padding-left:1px;">tarifa</div>
<div class="c" style="left:282px;width:79px;text-align:right;padding-right:3px;">2,09</div>
<div class="c" style="left:362px;width:15px;padding-left:1px;">C</div>
</div>
<div class="vl" style="left:440px;top:436px;height:144px"></div>
<div class="vl" style="left:511px;top:436px;height:144px"></div>
<div class="vl" style="left:702px;top:436px;height:144px"></div>
<div class="vl" style="left:782px;top:436px;height:144px"></div>
<div class="vl" style="left:798px;top:436px;height:144px"></div>
<div class="vl" style="left:420px;top:436px;height:144px"></div>
<div class="vl" style="left:440px;top:420px;height:15px;background:#d9d9d9"></div>
<div class="vl" style="left:511px;top:420px;height:15px;background:#d9d9d9"></div>
<div class="vl" style="left:702px;top:420px;height:15px;background:#d9d9d9"></div>
<div class="vl" style="left:782px;top:420px;height:15px;background:#d9d9d9"></div>
<div class="a" style="left:440px;top:421px;line-height:15px">Data</div>
<div class="a" style="left:511px;top:421px;line-height:15px">Documento</div>
<div class="a" style="left:702px;top:421px;line-height:15px">Valor</div>
<div class="a" style="left:420px;top:434px;width:380px;height:2px;background:linear-gradient(rgba(0,0,0,.4) 0,rgba(0,0,0,.4) 50%,#000 50%)"></div>
<div class="a" style="left:420px;top:580px;width:398px;height:1px;background:#9a9a9a"></div>
<div class="a" style="left:799px;top:420px;width:18px;height:160px;background:#f0f0f0"></div>
<svg class="a" style="left:803px;top:426px" width="9" height="6" viewBox="0 0 9 6"><path d="M1.2 5 L4.5 1.7 L7.8 5" fill="none" stroke="#4c4c4c" stroke-width="2.1"/></svg>
<svg class="a" style="left:803px;top:569px" width="9" height="6" viewBox="0 0 9 6"><path d="M1.2 1 L4.5 4.3 L7.8 1" fill="none" stroke="#4c4c4c" stroke-width="2.1"/></svg>
<div class="a" style="left:817px;top:419px;width:1px;height:162px;background:#a3a3ab"></div>
<div class="a" style="left:816px;top:420px;width:1px;height:160px;background:#fff"></div>
<div class="a" style="left:799px;top:436px;width:1px;height:144px;background:#fff"></div>
<div class="a" style="left:799px;top:579px;width:18px;height:1px;background:#fff"></div>
<div class="a b" style="right:432px;top:584px;letter-spacing:-.24px">Saldo Final: 0,00 C</div>
<div class="a b" style="right:35px;top:584px;letter-spacing:-.25px">Saldo Final: 48,44 C</div>
<div class="sw" style="left:15px;top:607px;background:#ccff80"></div>
<div class="a" style="left:27.5px;top:605px;letter-spacing:-.1px">Conciliados automaticamente: 0</div>
<div class="sw" style="left:15px;top:621px;background:#84aef5"></div>
<div class="a" style="left:27.5px;top:619px;letter-spacing:-.08px">Lançados e conciliados automaticamente na contabilidade: 6</div>
<div class="sw" style="left:15px;top:635px;background:#d4d4d4"></div>
<div class="a" style="left:27.5px;top:633px;letter-spacing:-.1px">Conciliados manualmente: 0</div>
<div class="a" style="left:392px;top:620px;width:13px;height:13px;background:#fff;border:1px solid #333"></div>
<div class="a" style="left:407.5px;top:620px">Ativar modo tutorial?</div>
<div class="btn" style="left:672px;top:604px;width:87px;height:42px"></div>
<svg class="a" style="left:703px;top:605px" width="26" height="26" viewBox="0 0 26 26"><rect x="3.3" y="3.2" width="16.6" height="18.8" rx=".8" fill="#fff" stroke="#76877a" stroke-width="1"/><rect x="2.4" y="2.3" width="18.4" height="20.6" rx="1.2" fill="none" stroke="#f6f6f6" stroke-width=".8"/><rect x="5.6" y="5.6" width="12.6" height="14.8" fill="#f1f1f3"/><rect x="8" y="6.2" width="9.6" height="1.6" fill="#b9b9be"/><path d="M8.3 7 V20 M10.8 7 V20 M13.4 7 V20 M16 7 V20" stroke="#d0d0d6" stroke-width=".9"/><path d="M5.6 9.5 H7 M5.6 14 H7" stroke="#cfcfd4" stroke-width=".6"/><ellipse cx="16.1" cy="18.5" rx="6.2" ry="4.9" fill="#f6f6f6"/><ellipse cx="16.1" cy="18.4" rx="5.6" ry="4.3" fill="#e2300f"/><path d="M16.6 18.8 L12.4 19.6 A4 3 0 0 1 15 15.8 Z" fill="#e07a10"/><path d="M16.8 18.6 L16.8 15.6 A4.2 3 0 0 1 20.8 18 Z" fill="#2e7fc4"/><path d="M16.8 18.8 L20.6 19.4 A4 3 0 0 1 16 21.4 Z" fill="#3f8a3a"/><path d="M16.7 18.7 L15.6 21.3 L17.2 21.2 Z" fill="#fff4c0"/></svg>
<div class="a" style="left:692px;top:631px;letter-spacing:.15px">Relatório</div>
<div class="btn" style="left:761px;top:604px;width:60px;height:42px"></div>
<svg class="a" style="left:781px;top:608px" width="20" height="20" viewBox="0 0 20 20"><defs><linearGradient id="gs" x1="0" y1="0" x2="0" y2="1"><stop offset="0" stop-color="#ff5050"/><stop offset=".22" stop-color="#f24040"/><stop offset=".5" stop-color="#8e1208"/><stop offset=".78" stop-color="#d42a18"/><stop offset="1" stop-color="#ff4a4a"/></linearGradient></defs><path d="M6.6 2.7 H13.4 L18 7 V13.6 L13.4 17.7 H6.6 L2 13.6 V7 Z" fill="url(#gs)" stroke="#e9b0b0" stroke-width=".5"/><path d="M6.9 6.9 L13.1 13.5 M13.1 6.9 L6.9 13.5" stroke="#f0f0f0" stroke-width="2.2" stroke-linecap="round"/></svg>
<div class="a" style="left:781px;top:631px"><u>S</u>air</div>
</body></html>
